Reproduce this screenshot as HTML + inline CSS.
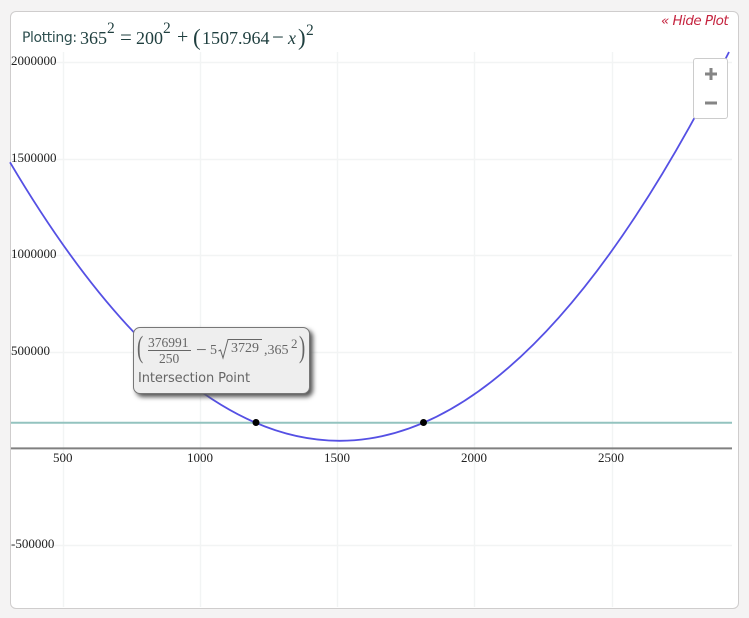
<!DOCTYPE html>
<html>
<head>
<meta charset="utf-8">
<style>
html,body{margin:0;padding:0;background:#f4f3f3;}
body{width:749px;height:618px;overflow:hidden;position:relative;}
.t{position:absolute;white-space:nowrap;line-height:1;}
#panel{position:absolute;left:10px;top:11px;width:727px;height:596px;background:#fff;border:1px solid #cfcdcd;border-radius:6px;}
svg{position:absolute;left:0;top:0;}
.m{font-family:"Liberation Serif",serif;color:#1f3f3f;font-size:18px;}
.lab{font-family:"Liberation Serif",serif;font-size:13px;color:#222;}
.tm{font-family:"Liberation Serif",serif;color:#666;}
#zoom{position:absolute;left:693px;top:58px;width:33px;height:59px;background:#fff;border:1px solid #ccc;border-radius:3px;}
#tip{position:absolute;left:133px;top:327px;width:175px;height:65px;background:#eee;border:1px solid #777;border-radius:7px;box-shadow:3px 3px 5px #555;}
</style>
</head>
<body>
<div id="panel"></div>
<svg width="749" height="618" viewBox="0 0 749 618">
<g stroke="#f2f4f4" stroke-width="1.4" fill="none">
<path d="M63.5 52V607M200.5 52V607M337.5 52V607M474.5 52V607M612.5 52V607"/>
<path d="M11 62.5H732M11 159.5H732M11 255.5H732M11 352.5H732M11 545.5H732"/>
</g>
<path d="M11 422.7H732" stroke="#93c3bf" stroke-width="2" fill="none"/>
<path d="M11 448.4H732" stroke="#808080" stroke-width="2" fill="none"/>
<path d="M10 162.3Q369.5 769.9 729 52" stroke="#5550e4" stroke-width="1.8" fill="none"/>
<circle cx="256" cy="422.5" r="3.5" fill="#000"/>
<circle cx="423.5" cy="422.5" r="3.5" fill="#000"/>
</svg>

<div class="t" style="left:661px;top:13px;font:italic 13.5px 'DejaVu Sans',sans-serif;letter-spacing:-.55px;color:#c5243f;">« Hide Plot</div>

<div class="t" style="left:22px;top:30px;font:14px 'DejaVu Sans',sans-serif;letter-spacing:-.4px;color:#2f5050;">Plotting:</div>
<div class="t m" style="left:80px;top:29px;">365</div>
<div class="t m" style="left:107px;top:21px;font-size:15.5px;">2</div>
<div class="t m" style="left:120px;top:27px;font-size:21px;">=</div>
<div class="t m" style="left:136px;top:29px;">200</div>
<div class="t m" style="left:163px;top:21px;font-size:15.5px;">2</div>
<div class="t m" style="left:177px;top:27px;font-size:20px;">+</div>
<div class="t m" style="left:193px;top:26px;font-size:23px;font-weight:100;">(</div>
<div class="t m" style="left:202px;top:29px;">1507.964</div>
<div class="t m" style="left:272px;top:27px;font-size:21px;">−</div>
<div class="t m" style="left:288px;top:29px;font-style:italic;">x</div>
<div class="t m" style="left:298px;top:26px;font-size:23px;">)</div>
<div class="t m" style="left:306px;top:23px;font-size:15.5px;">2</div>

<div class="t lab" style="left:11px;top:54px;">2000000</div>
<div class="t lab" style="left:11px;top:151px;">1500000</div>
<div class="t lab" style="left:11px;top:247px;">1000000</div>
<div class="t lab" style="left:11px;top:344px;">500000</div>
<div class="t lab" style="left:11px;top:537px;">-500000</div>
<div class="t lab" style="left:53px;top:451px;">500</div>
<div class="t lab" style="left:187px;top:451px;">1000</div>
<div class="t lab" style="left:461px;top:451px;">2000</div>
<div class="t lab" style="left:598px;top:451px;">2500</div>
<div class="t lab" style="left:324px;top:451px;">1500</div>

<div id="zoom"></div>
<svg width="749" height="618" viewBox="0 0 749 618">
<path d="M705 74H717M711 68V80" stroke="#858585" stroke-width="3" fill="none"/>
<path d="M705 103H717" stroke="#858585" stroke-width="3" fill="none"/>
</svg>

<div id="tip"></div>
<div class="t tm" style="left:137px;top:331px;font-size:31px;font-weight:100;transform:scaleX(.6);transform-origin:left top;">(</div>
<div class="t tm" style="left:148px;top:336px;font-size:13.5px;">376991</div>
<div style="position:absolute;left:148px;top:350px;width:43px;height:1px;background:#666;"></div>
<div class="t tm" style="left:159px;top:352px;font-size:13.5px;">250</div>
<div class="t tm" style="left:196px;top:341px;font-size:19px;">−</div>
<div class="t tm" style="left:210px;top:344px;font-size:14px;">5</div>
<svg width="749" height="618" viewBox="0 0 749 618">
<path d="M218.5 351L220.5 350L223 358L228 339.5H262" stroke="#666" stroke-width="1" fill="none"/>
</svg>
<div class="t tm" style="left:231px;top:342px;font-size:14px;">3729</div>
<div class="t tm" style="left:264px;top:344px;font-size:14px;">,365</div>
<div class="t tm" style="left:291px;top:337px;font-size:13px;">2</div>
<div class="t tm" style="left:299px;top:331px;font-size:31px;font-weight:100;transform:scaleX(.6);transform-origin:left top;">)</div>
<div class="t" style="left:138px;top:371px;font:13px 'DejaVu Sans',sans-serif;letter-spacing:-.1px;color:#666;">Intersection Point</div>
</body>
</html>
